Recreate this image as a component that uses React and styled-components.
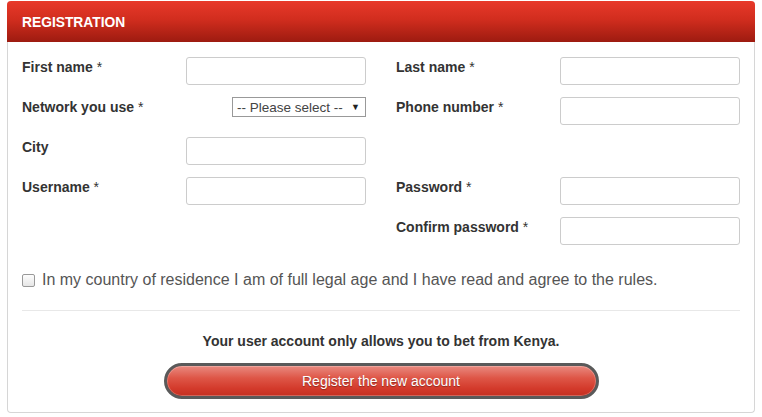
import React from 'react';
import styled, { createGlobalStyle } from 'styled-components';

// styling:

const GlobalStyle = createGlobalStyle`
  body {
    margin: 0;
    background: #fff;
    font-family: "Liberation Sans", Arial, sans-serif;
  }
`;

const Page = styled.div`
  padding: 1px 7px 0 7px;
  width: 762px;
  box-sizing: border-box;
`;

const Panel = styled.div`
  border: 1px solid #d6d6d6;
  border-top: none;
  border-radius: 4px;
  background: #fff;
  height: 412px;
  box-sizing: border-box;
`;

const Header = styled.div`
  height: 41px;
  box-sizing: border-box;
  border-radius: 4px 4px 0 0;
  margin: 0 -1px;
  background: linear-gradient(to bottom, #e8392a 0%, #d12d1e 45%, #9d1b10 100%);
  color: #fff;
  font-weight: bold;
  font-size: 13.8px;
  padding: 14px 0 0 15px;
`;

const Body = styled.div`
  padding: 15px 14px 0 14px;
`;

const Grid = styled.div`
  display: grid;
  grid-template-columns: 344px 344px;
  column-gap: 30px;
  row-gap: 12px;
`;

const Field = styled.div`
  display: flex;
  justify-content: space-between;
  height: 28px;
  grid-column: ${(p) => p.col};
  grid-row: ${(p) => p.row};
`;

const Label = styled.label`
  font-size: 14px;
  font-weight: bold;
  color: #333;
  padding-top: 2px;
`;

const Req = styled.span`
  font-weight: normal;
`;

const TextInput = styled.input`
  width: 180px;
  height: 28px;
  box-sizing: border-box;
  border: 1px solid #ccc;
  border-radius: 3px;
  background: #fff;
  margin: 0;
`;

const Select = styled.div`
  width: 134px;
  height: 20px;
  box-sizing: border-box;
  border: 1px solid #999;
  display: flex;
  align-items: center;
  justify-content: space-between;
  padding: 0 5px 0 4px;
  font-size: 13.5px;
  color: #444;
  background: #fff;
`;

const Caret = styled.span`
  font-size: 9px;
  color: #222;
`;

const CheckRow = styled.label`
  display: flex;
  align-items: center;
  margin-top: 26px;
  font-size: 16px;
  color: #555;
  height: 18px;
`;

const Box = styled.span`
  width: 11px;
  height: 11px;
  border: 1px solid #999;
  border-radius: 2px;
  background: linear-gradient(#fdfdfd, #e6e6e6);
  margin: 0 7px 0 0;
`;

const Divider = styled.hr`
  border: none;
  border-top: 1px solid #e8e8e8;
  margin: 21px 0 0 0;
`;

const Notice = styled.p`
  text-align: center;
  font-size: 14px;
  font-weight: bold;
  color: #333;
  margin: 22px 0 0 0;
`;

const ButtonRow = styled.div`
  display: flex;
  justify-content: center;
  margin-top: 14px;
`;

const Button = styled.button`
  width: 435px;
  height: 36px;
  border: 3px solid #5a5a5a;
  border-radius: 18px;
  background: linear-gradient(to bottom, #e98a80 0%, #de5647 40%, #d33a2b 75%, #c42f21 100%);
  color: #fff;
  font-family: "Liberation Sans", Arial, sans-serif;
  font-size: 14px;
  text-shadow: 0 1px 1px rgba(0, 0, 0, 0.35);
  box-shadow: inset 0 0 0 1px rgba(255, 255, 255, 0.25);
  padding: 0;
`;

// data:

const fields = [
  { label: 'First name', req: true, col: 1, row: 1 },
  { label: 'Last name', req: true, col: 2, row: 1 },
  { label: 'Network you use', req: true, col: 1, row: 2, select: true },
  { label: 'Phone number', req: true, col: 2, row: 2 },
  { label: 'City', req: false, col: 1, row: 3 },
  { label: 'Username', req: true, col: 1, row: 4 },
  { label: 'Password', req: true, col: 2, row: 4 },
  { label: 'Confirm password', req: true, col: 2, row: 5 },
];

// react:

const App = () => (
  <Page>
    <GlobalStyle />
    <Panel>
      <Header>REGISTRATION</Header>
      <Body>
        <Grid>
          {fields.map((f) => (
            <Field key={f.label} col={f.col} row={f.row}>
              <Label>
                {f.label}
                {f.req && <Req> *</Req>}
              </Label>
              {f.select ? (
                <Select>
                  <span>-- Please select --</span>
                  <Caret>▼</Caret>
                </Select>
              ) : (
                <TextInput type="text" />
              )}
            </Field>
          ))}
        </Grid>
        <CheckRow>
          <Box />
          In my country of residence I am of full legal age and I have read and agree to the rules.
        </CheckRow>
        <Divider />
        <Notice>Your user account only allows you to bet from Kenya.</Notice>
        <ButtonRow>
          <Button>Register the new account</Button>
        </ButtonRow>
      </Body>
    </Panel>
  </Page>
);

export default App;
